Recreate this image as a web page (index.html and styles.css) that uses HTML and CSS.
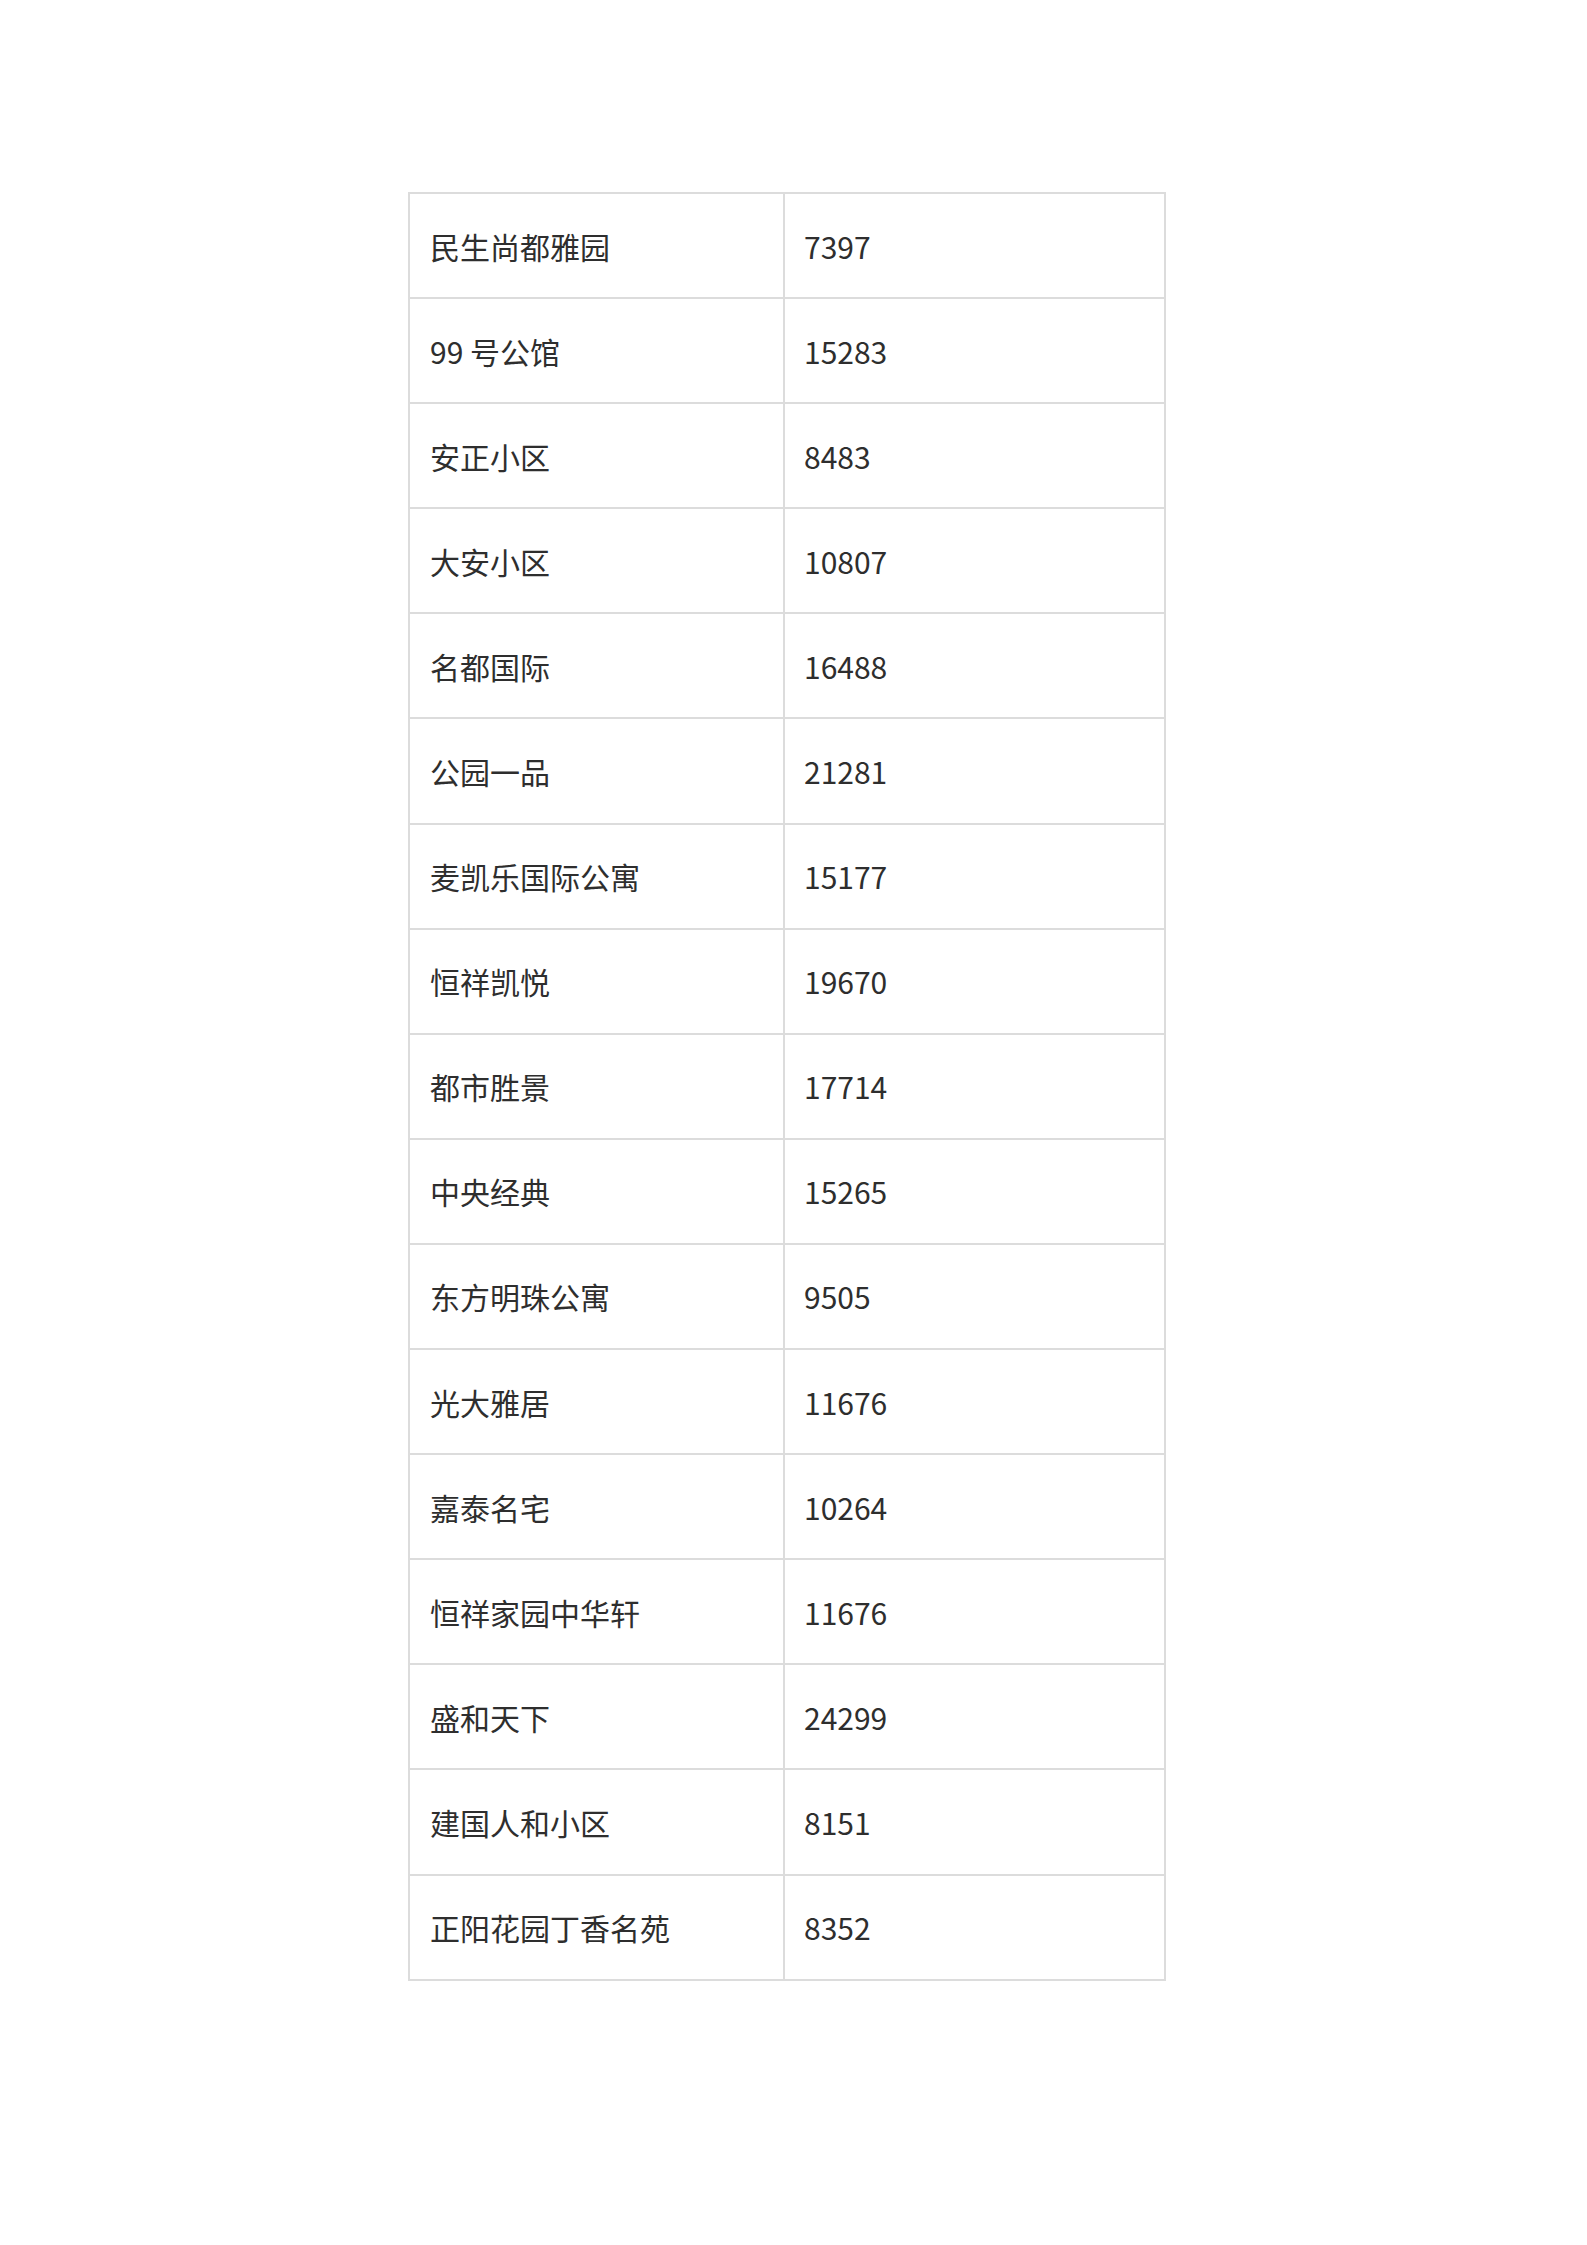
FILE: index.html
```html
<!DOCTYPE html>
<html lang="zh-CN">
<head>
<meta charset="utf-8">
<title>小区价格</title>
<link rel="stylesheet" href="styles.css">
</head>
<body>
<main class="page">
<table class="price-table">
<tbody>
<tr><td class="name">民生尚都雅园</td><td class="price">7397</td></tr>
<tr><td class="name">99 号公馆</td><td class="price">15283</td></tr>
<tr><td class="name">安正小区</td><td class="price">8483</td></tr>
<tr><td class="name">大安小区</td><td class="price">10807</td></tr>
<tr><td class="name">名都国际</td><td class="price">16488</td></tr>
<tr><td class="name">公园一品</td><td class="price">21281</td></tr>
<tr><td class="name">麦凯乐国际公寓</td><td class="price">15177</td></tr>
<tr><td class="name">恒祥凯悦</td><td class="price">19670</td></tr>
<tr><td class="name">都市胜景</td><td class="price">17714</td></tr>
<tr><td class="name">中央经典</td><td class="price">15265</td></tr>
<tr><td class="name">东方明珠公寓</td><td class="price">9505</td></tr>
<tr><td class="name">光大雅居</td><td class="price">11676</td></tr>
<tr><td class="name">嘉泰名宅</td><td class="price">10264</td></tr>
<tr><td class="name">恒祥家园中华轩</td><td class="price">11676</td></tr>
<tr><td class="name">盛和天下</td><td class="price">24299</td></tr>
<tr><td class="name">建国人和小区</td><td class="price">8151</td></tr>
<tr><td class="name">正阳花园丁香名苑</td><td class="price">8352</td></tr>
</tbody>
</table>
</main>
</body>
</html>
```
FILE: styles.css
```css
html, body {
  margin: 0;
  padding: 0;
  background: #ffffff;
}
.page {
  padding-top: 192px;
  padding-left: 408px;
}
.price-table {
  border-collapse: collapse;
  width: 758px;
  table-layout: fixed;
  font-family: "Noto Sans CJK SC", "Noto Sans", sans-serif;
  font-size: 30px;
  color: #2e2e2e;
}
.price-table td {
  border: 2px solid #dcdcdc;
  height: 105.1px;
  padding: 0 20px;
  vertical-align: middle;
  box-sizing: border-box;
  line-height: 1.2;
}
.price-table td.name {
  width: 375px;
  padding-left: 20px;
}
.price-table td.price {
  padding-left: 19px;
}
```
